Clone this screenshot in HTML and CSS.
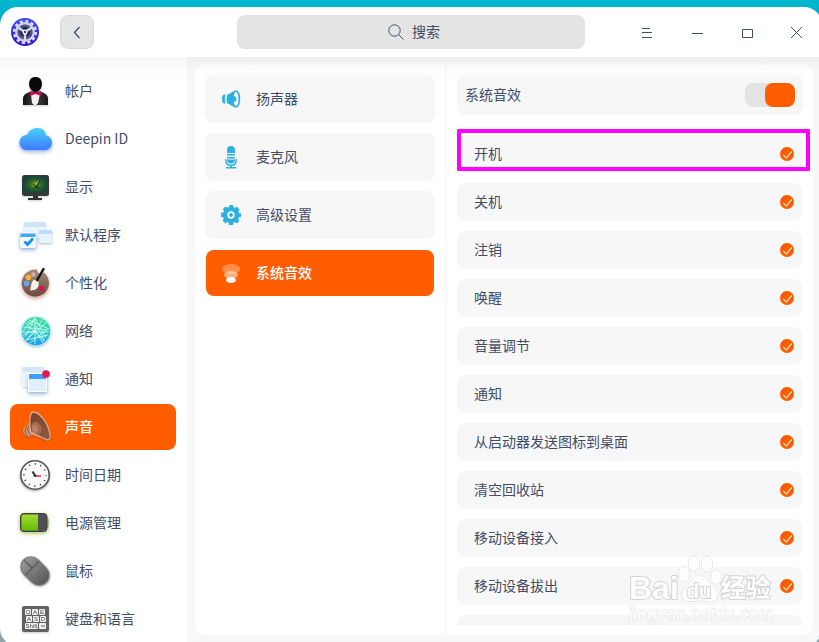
FILE: index.html
```html
<!DOCTYPE html>
<html lang="zh-CN">
<head>
<meta charset="utf-8">
<title>声音</title>
<link rel="stylesheet" href="styles.css">
</head>
<body>
<div class="window">
  <header class="titlebar">
    <div class="titlebar-start">
      <svg class="logo" viewBox="0 0 28 28">
        <defs><linearGradient id="lg" x1="0" y1="0" x2="0" y2="1"><stop offset="0" stop-color="#3a4ffa"/><stop offset="1" stop-color="#3a10d8"/></linearGradient></defs>
        <circle cx="14" cy="14" r="14" fill="url(#lg)"/>
        <circle cx="14" cy="14" r="10.800" fill="none" stroke="#dfe1f2" stroke-width="2.600" stroke-dasharray="3.100 2.550"/>
        <circle cx="14" cy="14" r="8.800" fill="#23265a" stroke="#cfd2e8" stroke-width="2.400"/>
        <circle cx="14" cy="14" r="6.200" fill="none" stroke="#5f6392" stroke-width="1.500"/>
        <path d="M14 14V22M14 14L7 9.500M14 14l7-4.500" stroke="#d5d8ea" stroke-width="2.400"/>
        <circle cx="14" cy="14" r="2.600" fill="#e4e6f4"/><circle cx="14" cy="14" r="1.100" fill="#171a50"/>
      </svg>
      <button class="back" aria-label="返回"><svg viewBox="0 0 32 32"><path d="M18.500 11l-5 5.500 5 5.500" fill="none" stroke="#414d68" stroke-width="1.300"/></svg></button>
    </div>
    <button class="search">
      <svg viewBox="0 0 16 16"><circle cx="6.500" cy="6.500" r="5.700"/><path d="M10.500 10.500l5 5"/></svg>
      <span>搜索</span>
    </button>
    <div class="titlebar-end">
      <button aria-label="菜单"><svg viewBox="0 0 50 50"><path d="M20 21.500h8M20 25.500h10M20 30.500h10"/></svg></button>
      <button aria-label="最小化"><svg viewBox="0 0 50 50"><path d="M20 26.500h11"/></svg></button>
      <button aria-label="最大化"><svg viewBox="0 0 50 50"><path d="M20.500 22.500h10v8h-10z"/></svg></button>
      <button aria-label="关闭"><svg viewBox="0 0 50 50"><path d="M19 20l11 11M30 20l-11 11"/></svg></button>
    </div>
  </header>

  <main class="body">
    <nav class="sidebar">
      <a href="#">
        <svg viewBox="0 0 36 36">
          <defs><linearGradient id="suit" x1="0" x2="1"><stop offset="0" stop-color="#111"/><stop offset=".5" stop-color="#444"/><stop offset="1" stop-color="#151515"/></linearGradient></defs>
          <path d="M6 32v-6c0-4 3-6 8-7.500h9c5 1.500 8 3.500 8 7.500v6z" fill="url(#suit)"/>
          <path d="M14 21h9l-2 9-2 2h-2l-2-2z" fill="#f4f0f2"/>
          <path d="M18.500 4c4 0 6.400 2.700 6.400 6.500 0 4-2 8.500-6.400 8.500s-6.400-4.500-6.400-8.500c0-3.800 2.400-6.500 6.400-6.500z" fill="#090909"/>
          <path d="M13 18l5 2 6-2v5l-5.500-2-5.500 2z" fill="#c51054"/>
        </svg><span>帐户</span></a>
      <a href="#">
        <svg viewBox="0 0 36 36">
          <defs><linearGradient id="cloud" x1="0" y1="0" x2="0" y2="1"><stop offset="0" stop-color="#46d3fb"/><stop offset="1" stop-color="#3f79fe"/></linearGradient></defs>
          <path class="glow-blue" d="M9 29a7 7.500 0 0 1 1-15C12 9.500 16 7 20.500 7c5.500 0 8 3.500 8.500 7.500 3.500.5 6 3.500 6 7s-2.500 7.500-7 7.500z" fill="url(#cloud)"/>
        </svg><span>Deepin ID</span></a>
      <a href="#">
        <svg viewBox="0 0 36 36">
          <defs><radialGradient id="scr"><stop offset="0" stop-color="#8cb914"/><stop offset=".5" stop-color="#2d681f"/><stop offset="1" stop-color="#16463d"/></radialGradient></defs>
          <path d="M16 26h5v3h4v2H11v-2h5z" fill="#333"/>
          <rect x="5" y="6" width="27" height="21" rx="2.500" fill="#383838"/>
          <rect x="6.500" y="7.500" width="24" height="16" fill="url(#scr)"/>
          <path d="M14 14l5 2 5-6-3 7 2 4-3-2-3 1 1-3z" fill="#163e28"/><path d="M18 15l4-4-3 6z" fill="#b8a8c8"/>
        </svg><span>显示</span></a>
      <a href="#">
        <svg viewBox="0 0 36 36">
          <rect x="7" y="5" width="22" height="16" rx="2" fill="#edf5ff"/><path d="M7 10V7q0-2 2-2h18q2 0 2 2v3z" fill="#cfe3fb"/>
          <rect class="glow-soft" x="22" y="13" width="13" height="13" rx="1.500" fill="#e8f3ff"/><path d="M22 17v-4h12l1 1v3z" fill="#bddcff"/>
          <rect class="glow-blue" x="3" y="15" width="16" height="16" rx="1.500" fill="#f1f8ff"/><path d="M3.500 16.500h15v3.500h-15z" fill="#42a5f8"/>
          <path d="M7.500 24.500l3 3 5.500-6" fill="none" stroke="#138df8" stroke-width="2.600"/>
        </svg><span>默认程序</span></a>
      <a href="#">
        <svg viewBox="0 0 36 36">
          <defs><linearGradient id="pal" x1="0" y1="0" x2="0" y2="1"><stop offset="0" stop-color="#a58d7c"/><stop offset="1" stop-color="#694b3e"/></linearGradient></defs>
          <path class="glow-red" d="M20 4.500A13.600 13.600 0 1 0 27 7.500C24 10 20 9 20 4.500z" fill="url(#pal)"/>
          <circle cx="11.500" cy="12.500" r="2.800" fill="#fbb03c"/><circle cx="16.500" cy="9.500" r="2.200" fill="#d0b3a3"/><circle cx="9.500" cy="18.500" r="2.700" fill="#60aaf0"/><circle cx="24.500" cy="23.500" r="2.700" fill="#e50e50"/>
          <path d="M26.500 4L19 17" stroke="#151515" stroke-width="2.400" stroke-linecap="round"/>
          <path d="M17 14.500l4.500 2.500c1 5-2 8.500-8.500 8.500 1.500-3 0-7 4-11z" fill="#f5f2ef"/>
        </svg><span>个性化</span></a>
      <a href="#">
        <svg viewBox="0 0 36 36">
          <defs><linearGradient id="net" x1=".5" y1="0" x2=".4" y2="1"><stop offset="0" stop-color="#43e19f"/><stop offset=".55" stop-color="#23cbbf"/><stop offset="1" stop-color="#1a9bf5"/></linearGradient></defs>
          <circle class="glow-cyan" cx="19" cy="18" r="14" fill="url(#net)"/>
          <g fill="none" stroke="#dffcf5" stroke-width=".8"><path d="M18 5v26M5 19h27M8 10l20 18M30 9L9 27M18 5L8 24M18 5l11 20M6 14l25 3M9 27l22-5M12 7l20 9M5 19L18 5M9 27l9-10 8 13M18 17l8-11M13 30l16-13M6 22l13-5"/><path d="M10 9c7 2 14 8 17 19"/></g>
        </svg><span>网络</span></a>
      <a href="#">
        <svg viewBox="0 0 36 36">
          <rect x="5" y="6" width="22" height="20" rx="2" fill="#edf5ff"/><path d="M5 11V8q0-2 2-2h18q2 0 2 2v3z" fill="#d3e6fb"/>
          <rect class="glow-blue" x="11" y="12" width="19" height="19" rx="1.500" fill="#fff"/><path d="M12 18h17v12H12z" fill="#e0efff"/><path d="M12 13h17v5H12z" fill="#3ba1fb"/>
          <circle cx="29" cy="13" r="3.800" fill="#e11850"/>
        </svg><span>通知</span></a>
      <a href="#" class="active" aria-current="page">
        <svg viewBox="0 0 36 36">
          <defs><linearGradient id="horn" x1="0" y1="0" x2="1" y2="1"><stop offset="0" stop-color="#76412d"/><stop offset="1" stop-color="#8f5941"/></linearGradient></defs>
          <path d="M15 5L11 16c-5 1-6 5-4 8.500C9 28 12 29 16 26l14 5z" fill="#cf9574"/>
          <path d="M10 17c-3 4-2 8 1 11M12 17c-2 4-1 7 2 10" fill="none" stroke="#8d583f" stroke-width="1"/>
          <path d="M16 3c7 0 15 11 17 22 1 5-1 7-5 5l-14-7c-2-6-2-19 2-20z" fill="url(#horn)" stroke="#dfac8b" stroke-width="1.300"/>
          <ellipse cx="19.500" cy="19" rx="4.800" ry="6.500" transform="rotate(-25 19.500 19)" fill="#a3694f"/><ellipse cx="18" cy="20" rx="3" ry="4" fill="#b98164"/>
        </svg><span>声音</span></a>
      <a href="#">
        <svg viewBox="0 0 36 36">
          <circle class="glow-grey" cx="18" cy="18" r="14.200" fill="#fafafa" stroke="#555" stroke-width="1.600"/>
          <circle cx="18" cy="18" r="11" fill="none" stroke="#333" stroke-width="2" stroke-dasharray=".9 4.860" stroke-dashoffset=".45"/>
          <path d="M15.500 14.500L18 18.500" stroke="#333" stroke-width="2"/><path d="M17 19h7" stroke="#f25c5c" stroke-width="2"/><circle cx="18" cy="18.500" r="1.500" fill="#444"/>
        </svg><span>时间日期</span></a>
      <a href="#">
        <svg viewBox="0 0 36 36">
          <defs><linearGradient id="bat" x1="0" y1="0" x2="0" y2="1"><stop offset="0" stop-color="#a4dc34"/><stop offset="1" stop-color="#64bd02"/></linearGradient></defs>
          <rect x="29" y="14" width="3" height="8" fill="#bbb"/>
          <rect class="glow-green" x="3.500" y="8.500" width="26.500" height="18" rx="3.500" fill="#505052" stroke="#414143"/>
          <path d="M7 9.500h14v16H7q-2.500 0-2.500-2.500V12q0-2.500 2.500-2.500z" fill="url(#bat)"/>
        </svg><span>电源管理</span></a>
      <a href="#">
        <svg viewBox="0 0 36 36">
          <defs><linearGradient id="mou" x1="0" y1="0" x2="0" y2="1"><stop offset="0" stop-color="#999"/><stop offset="1" stop-color="#575757"/></linearGradient></defs>
          <g class="glow-grey" transform="rotate(-45 18 18)"><rect x="8" y="2" width="20" height="32" rx="10" fill="url(#mou)" stroke="#666"/><path d="M8 14h20M18 2v12" stroke="#4b4b4b" stroke-width="1.200"/></g>
        </svg><span>鼠标</span></a>
      <a href="#">
        <svg viewBox="0 0 36 36">
          <rect x="5" y="5" width="27" height="26" rx="2" fill="#626262"/>
          <g fill="#f2f2f2"><rect x="8" y="8" width="6" height="6" rx="1"/><rect x="15" y="8" width="6" height="6" rx="1"/><rect x="22" y="8" width="6" height="6" rx="1"/><rect x="9" y="15" width="6" height="6" rx="1"/><rect x="16" y="15" width="6" height="6" rx="1"/><rect x="23" y="15" width="6" height="6" rx="1"/><rect x="8" y="22" width="13" height="6" rx="1"/><rect x="22" y="22" width="7" height="6" rx="1"/></g>
          <g class="keycaps"><text x="11" y="13">Q</text><text x="18" y="13">A</text><text x="25" y="13">E</text><text x="12" y="20">A</text><text x="19" y="20">S</text><text x="26" y="20">D</text><text x="14.500" y="27">Shift</text></g>
          <path d="M24 25h4" stroke="#555"/>
        </svg><span>键盘和语言</span></a>
    </nav>

    <div class="content">
      <div class="card">
        <nav class="submenu">
          <a href="#"><svg viewBox="0 0 20 20"><path d="M3 5.500h1.500q-1.500 4 0 9H3Q1 14 1 10t2-4.500zM6 6l8-4.500v17L6 14q-1-4 0-8z" fill="#2cb1de"/><ellipse cx="15" cy="10" rx="3.400" ry="8" fill="#fff" stroke="#2cb1de" stroke-width="1.700"/><path d="M11.500 6.500q4 .5 4 3.500t-4 3.500z" fill="#2cb1de"/></svg><span>扬声器</span></a>
          <a href="#"><svg viewBox="0 0 20 24"><g fill="#2cb1de"><path d="M6 8V5q0-4 4-4t4 4v3zM6 9h8v1.500H6zM6 12h8v1.500H6zM6 14.500h8q0 4-4 4t-4-4z"/><path d="M9 20h2v2h4v1.500H5V22h4z"/></g><path d="M4.800 14v1.500q0 4.800 5.200 4.800t5.200-4.800V14" fill="none" stroke="#2cb1de" stroke-width="1.400"/></svg><span>麦克风</span></a>
          <a href="#"><svg viewBox="0 0 20 20"><circle cx="10" cy="10" r="8.300" fill="none" stroke="#2cb1de" stroke-width="3.400" stroke-dasharray="4 2.520" stroke-dashoffset="2"/><circle cx="10" cy="10" r="6" fill="#fff" stroke="#2cb1de" stroke-width="4.600"/><circle cx="10" cy="10" r="1.900" fill="#2cb1de"/></svg><span>高级设置</span></a>
          <a href="#" class="active" aria-current="page"><svg viewBox="0 0 20 20"><ellipse cx="10" cy="6" rx="9" ry="5" fill="#fff" opacity=".3"/><ellipse cx="10" cy="12" rx="7" ry="4" fill="#fff" opacity=".5"/><ellipse cx="10" cy="17" rx="5" ry="3" fill="#fff"/></svg><span>系统音效</span></a>
        </nav>

        <section class="effects">
          <label class="master"><span>系统音效</span><input type="checkbox" class="switch" checked></label>
          <div class="list">
            <label class="row marked"><span>开机</span><input type="checkbox" class="tick" checked></label>
            <label class="row"><span>关机</span><input type="checkbox" class="tick" checked></label>
            <label class="row"><span>注销</span><input type="checkbox" class="tick" checked></label>
            <label class="row"><span>唤醒</span><input type="checkbox" class="tick" checked></label>
            <label class="row"><span>音量调节</span><input type="checkbox" class="tick" checked></label>
            <label class="row"><span>通知</span><input type="checkbox" class="tick" checked></label>
            <label class="row"><span>从启动器发送图标到桌面</span><input type="checkbox" class="tick" checked></label>
            <label class="row"><span>清空回收站</span><input type="checkbox" class="tick" checked></label>
            <label class="row"><span>移动设备接入</span><input type="checkbox" class="tick" checked></label>
            <label class="row"><span>移动设备拔出</span><input type="checkbox" class="tick" checked></label>
            <div class="row"></div>
          </div>
        </section>
      </div>
    </div>
  </main>
</div>

<div class="watermark">
  <div class="brand">
    <span class="bai">Bai</span>
    <span class="paw"><svg viewBox="0 0 46 50"><g fill="#fff" stroke="#ccc"><ellipse cx="7" cy="20" rx="5.500" ry="7.500"/><ellipse cx="17" cy="9.500" rx="5.500" ry="7.500"/><ellipse cx="30" cy="10" rx="5.500" ry="7.500"/><ellipse cx="39" cy="23" rx="5.500" ry="7"/><path d="M22 21c5 0 8 5 12 9 5 4 8 8 7 12-2 7-8 6-12 5q-7-1-13 0c-4 1-10 1-11-6 0-5 4-8 7-11 3-4 5-9 10-9z"/></g></svg><b>du</b></span>
    <span class="jing">经验</span>
  </div>
  <div class="site">jingyan.baidu.com</div>
</div>
</body>
</html>
```
FILE: styles.css
```css
* { box-sizing: border-box; }

body {
  margin: 0;
  height: 100vh;
  overflow: hidden;
  position: relative;
  background: linear-gradient(#00b8cf 0, #00a8bf 30px, #94a3a5 100%);
  color: #414d68;
  font: 14px/20px "Noto Sans CJK SC", sans-serif;
}

a { color: inherit; text-decoration: none; }
button { border: 0; padding: 0; background: none; color: inherit; font: inherit; }
svg { display: block; overflow: visible; }

.window {
  display: flex;
  flex-direction: column;
  height: calc(100vh - 3px);
  margin: 7px -3px 0 0;
  border-radius: 18px;
  overflow: hidden;
  background: #fff;
}

/* Title bar */
.titlebar {
  flex: none;
  display: grid;
  grid-template-columns: 1fr minmax(0, 348px) 1fr;
  align-items: center;
  height: 50px;
}
.titlebar-start { display: flex; align-items: center; gap: 21px; padding-left: 11px; }
.logo { width: 28px; height: 28px; }
.back {
  width: 34px;
  height: 34px;
  border: 1px solid #d9d9d9;
  border-radius: 8px;
  background: #e5e5e5;
}
.back svg { width: 32px; height: 32px; }
.search {
  display: flex;
  align-items: center;
  justify-content: center;
  gap: 8px;
  height: 34px;
  padding-left: 6px;
  border-radius: 8px;
  background: #e4e4e4;
}
.search svg { width: 16px; height: 16px; fill: none; stroke: #414d68; }
.titlebar-end { display: flex; justify-content: flex-end; }
.titlebar-end button, .titlebar-end svg { width: 50px; height: 50px; }
.titlebar-end svg { fill: none; stroke: #414d68; }

/* Main area */
.body { flex: 1; min-height: 0; display: flex; position: relative; }
.body::before {
  content: "";
  position: absolute;
  inset: 0 0 auto;
  height: 20px;
  background: linear-gradient(rgba(0, 0, 0, .035), rgba(0, 0, 0, 0));
  pointer-events: none;
  z-index: 1;
}

.search span, .sidebar span, .submenu span, .effects span { padding-bottom: 2px; }

.sidebar {
  flex: 0 0 187px;
  display: flex;
  flex-direction: column;
  gap: 2px;
  padding: 11px 11px 0 10px;
}
.sidebar a {
  flex: none;
  display: flex;
  align-items: center;
  gap: 12px;
  height: 46px;
  padding-left: 7px;
  border-radius: 8px;
}
.sidebar svg { width: 36px; height: 36px; filter: drop-shadow(0 1px 1px rgba(0, 0, 0, .2)); }
.glow-blue { filter: drop-shadow(0 2px 2px rgba(63, 140, 230, .4)); }
.glow-soft { filter: drop-shadow(0 1px 1px rgba(63, 140, 230, .2)); }
.glow-red { filter: drop-shadow(0 2px 2px rgba(210, 80, 60, .4)); }
.glow-cyan { filter: drop-shadow(0 1px 2px rgba(30, 190, 240, .5)); }
.glow-green { filter: drop-shadow(0 1px 2px rgba(150, 210, 30, .6)); }
.glow-grey { filter: drop-shadow(0 1px 1px rgba(0, 0, 0, .2)); }
.keycaps { font: 6px "Liberation Sans", sans-serif; text-anchor: middle; fill: #444; }

.sidebar .active, .submenu .active { background: #ff5d00; color: #fff; font-weight: 500; }

.content { flex: 1; min-width: 0; padding: 8px 9px 11px 8px; background: #f8f8f8; }
.card {
  display: flex;
  height: 100%;
  border-radius: 8px;
  background: #fff;
  overflow: hidden;
}

.submenu {
  flex: 0 0 252px;
  display: flex;
  flex-direction: column;
  gap: 10px;
  padding: 10px;
  border-right: 2px solid #f8f8f8;
}
.submenu a {
  display: flex;
  align-items: center;
  gap: 15px;
  height: 48px;
  padding-left: 16px;
  border-radius: 8px;
  background: #f7f7f7;
}
.submenu .active { height: 46px; margin: 1px; padding-left: 15px; }
.submenu svg { width: 20px; height: 24px; }

/* Sound effects */
.effects { flex: 1; min-width: 0; display: flex; flex-direction: column; padding: 10px 0 10px 10px; }
.master, .row {
  display: flex;
  align-items: center;
  justify-content: space-between;
  flex: none;
  border-radius: 8px;
  background: #f7f7f7;
}
.master { height: 40px; margin-right: 10px; padding: 0 8px; }
.list {
  flex: 1;
  min-height: 0;
  display: flex;
  flex-direction: column;
  gap: 10px;
  padding: 20px 11px 0 0;
  overflow: hidden;
}
.row { position: relative; height: 38px; padding: 0 8px 0 17px; }
.marked::after {
  content: "";
  position: absolute;
  inset: -6px -8px 2px 0;
  border: 4px solid #f0f;
  border-radius: 1px;
}

.switch, .tick { appearance: none; margin: 0; position: relative; }
.switch { width: 50px; height: 24px; border-radius: 8px; background: #e3e3e3; }
.switch::before {
  content: "";
  position: absolute;
  inset: 0 auto 0 0;
  width: 30px;
  border-radius: 8px;
  background: #ff5d00;
}
.switch:checked::before { inset: 0 0 0 auto; }
.tick { width: 14px; height: 14px; border-radius: 50%; background: #e3e3e3; }
.tick:checked { background: #ff5d00; }
.tick:checked::before {
  content: "";
  position: absolute;
  top: 2px;
  left: 5px;
  width: 4px;
  height: 8px;
  border: solid #fff;
  border-width: 0 1px 1px 0;
  transform: rotate(40deg);
}

/* Watermark */
.watermark {
  position: absolute;
  right: 42px;
  bottom: 18px;
  width: 148px;
  color: #fff;
  opacity: .8;
  pointer-events: none;
  font-family: "Liberation Sans", "Noto Sans CJK SC", sans-serif;
  -webkit-text-stroke: 2px #ccc;
  paint-order: stroke fill;
}
.brand { display: flex; align-items: flex-end; height: 50px; font-weight: 700; }
.bai { font-size: 32px; line-height: 32px; }
.paw { position: relative; margin: 0 -2px; }
.paw svg { width: 46px; height: 50px; }
.paw b { position: absolute; left: 10px; bottom: 3px; font-size: 20px; line-height: 20px; }
.jing { font-size: 25px; line-height: 32px; white-space: nowrap; }
.site { font-size: 18px; line-height: 20px; -webkit-text-stroke: 1px #d8d8d8; }
```
